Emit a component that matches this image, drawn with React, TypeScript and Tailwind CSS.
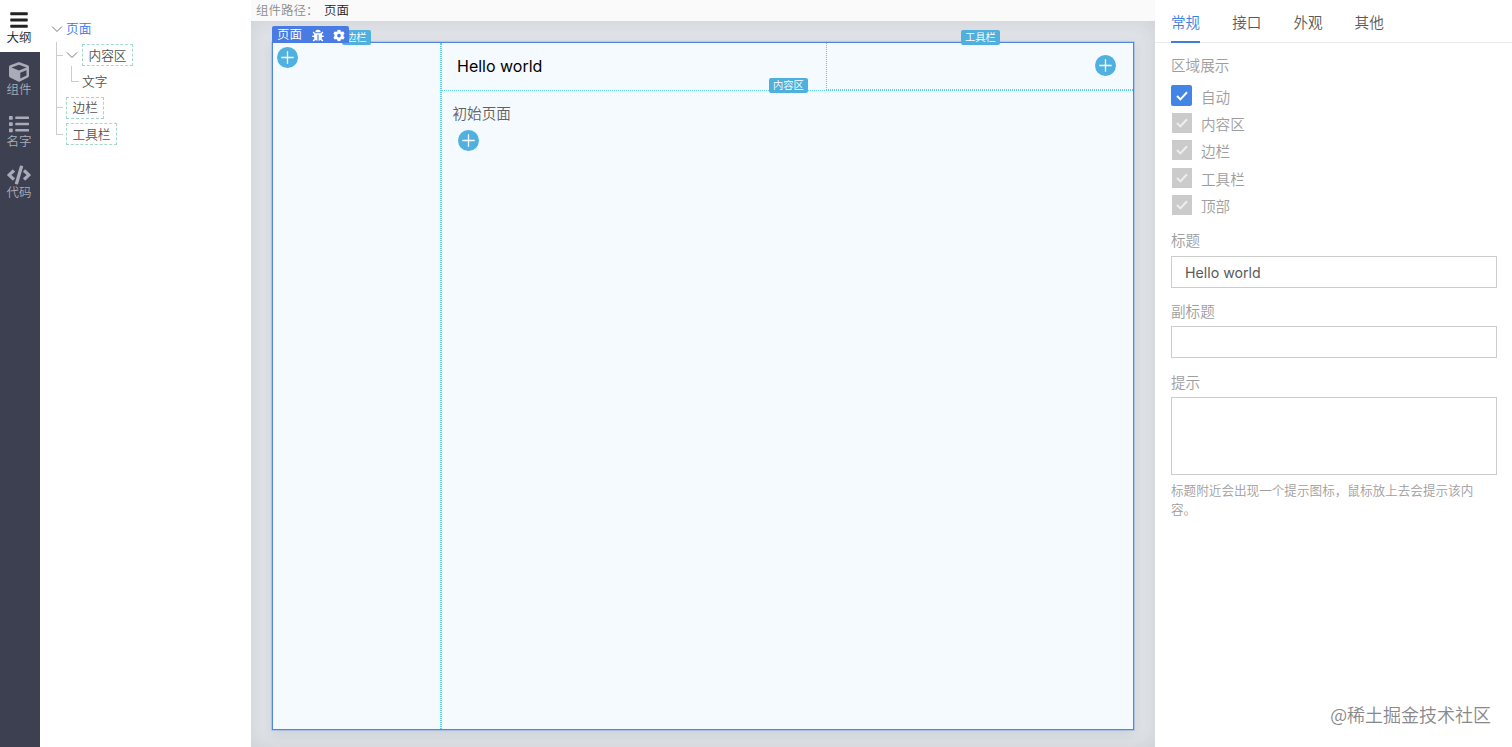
import React, { useState } from 'react';
import clsx from 'clsx';
import { FaBars, FaBug, FaCode, FaCog, FaCube, FaList } from 'react-icons/fa';

const navItems = [
  { label: '大纲', icon: FaBars },
  { label: '组件', icon: FaCube },
  { label: '名字', icon: FaList },
  { label: '代码', icon: FaCode },
];

const tabs = ['常规', '接口', '外观', '其他'];

const regions = [
  { label: '自动', disabled: false },
  { label: '内容区', disabled: true },
  { label: '边栏', disabled: true },
  { label: '工具栏', disabled: true },
  { label: '顶部', disabled: true },
];

function Chevron() {
  return (
    <svg className="h-[7px] w-3 shrink-0" viewBox="0 0 12 7" fill="none" stroke="#777" strokeWidth="1">
      <path d="M1 .5l5 5 5-5" />
    </svg>
  );
}

function NavBar() {
  return (
    <nav className="flex w-10 shrink-0 flex-col bg-[#3c4050]">
      {navItems.map(({ label, icon: Icon }, i) => (
        <div
          key={label}
          className={clsx(
            'flex flex-col items-center pr-[2px]',
            i === 0 ? 'h-[52px] bg-white pt-[10px] text-[#222]' : 'h-[51.5px] pt-[10px] text-[#a9acb8]'
          )}
        >
          <Icon className={clsx('h-5 shrink-0', label === '代码' ? 'w-6' : 'w-5')} />
          <span className="-mt-px text-[12.5px] leading-[15px]">{label}</span>
        </div>
      ))}
    </nav>
  );
}

function Slot({ children }: { children: React.ReactNode }) {
  return (
    <span className="flex h-[22px] items-center border border-dashed border-[#a3d8ca] px-[5.5px] pb-[2px] whitespace-nowrap">
      {children}
    </span>
  );
}

function Outline() {
  return (
    <aside className="w-[211px] shrink-0 bg-white pt-4 pl-[11px] text-[12.7px] text-[#555]">
      <div className="flex h-[26px] items-center gap-[3px] text-[#3478f6]">
        <Chevron />
        <span className="-translate-y-px">页面</span>
      </div>
      <div className="relative ml-[5px]">
        {/* guide line down to the last child */}
        <div className="absolute top-0 left-0 h-[93px] w-px bg-[#ccc]" />
        <div className="flex h-[26.4px] items-center">
          <div className="mr-[3px] h-px w-[7px] bg-[#ccc]" />
          <Chevron />
          <div className="ml-1">
            <Slot>内容区</Slot>
          </div>
        </div>
        <div className="flex h-[26.4px] items-center pl-[15px]">
          <div className="mr-[3px] h-4 w-[8px] -translate-y-2 border-b border-l border-[#ccc]" />
          <span className="-translate-y-px">文字</span>
        </div>
        {['边栏', '工具栏'].map((name) => (
          <div key={name} className="flex h-[26.2px] items-center">
            <div className="mr-[3px] h-px w-[7px] bg-[#ccc]" />
            <Slot>{name}</Slot>
          </div>
        ))}
      </div>
    </aside>
  );
}

function AddButton() {
  return (
    <button className="flex h-[21px] w-[21px] items-center justify-center rounded-full bg-[#50b0e0]">
      <svg className="h-[13px] w-[13px]" viewBox="0 0 13 13" stroke="#fff" strokeWidth="1.3">
        <path d="M6.5 .3v12.4M.3 6.5h12.4" />
      </svg>
    </button>
  );
}

function RegionTag({ children, className }: { children: React.ReactNode; className?: string }) {
  return (
    <span
      className={clsx(
        'absolute flex h-[15px] items-center rounded-[2px] bg-[#50b0dd] px-1 text-[10.3px] leading-none whitespace-nowrap text-white',
        className
      )}
    >
      {children}
    </span>
  );
}

function Canvas() {
  return (
    <main className="flex min-w-0 flex-1 flex-col">
      <div className="flex h-[21px] shrink-0 items-center bg-[#fafafa] pl-[5px] text-[12.5px]">
        <span className="w-[68px] text-[#8c8c8c]">组件路径：</span>
        <span className="text-[#222]">页面</span>
      </div>
      <div className="flex flex-1 bg-[#e0e3e8] pt-[21px] pr-[21px] pb-[17px] pl-[21px] shadow-[inset_0_0_20px_rgba(90,90,90,0.14)]">
        <div className="relative flex flex-1 border border-[#4f86e4] bg-[#f5faff] shadow-[0_3px_10px_rgba(60,90,120,0.14),0_0_0_0.5px_#8fb4ee]">
          <div className="w-[168px] shrink-0 border-r border-dotted border-[#5fd0ea] pt-1 pl-1">
            <AddButton />
          </div>
          <div className="flex flex-1 flex-col border-l border-dotted border-[#5fc8ea]">
            <header className="relative flex h-12 shrink-0 border-b border-dotted border-[#5fd0ea]">
              <div className="flex flex-1 items-center pl-[15px] font-['Inter','Liberation_Sans',sans-serif] text-base font-normal text-black">
                <span className="-translate-y-px">Hello world</span>
              </div>
              <div className="flex h-[47px] w-[307px] items-center justify-end border-b border-l border-dotted border-[#5fc8ea] pr-[17px] pb-px">
                <AddButton />
              </div>
              <RegionTag className="top-[35px] left-[327px]">内容区</RegionTag>
              <RegionTag className="-top-[13px] left-[519px]">工具栏</RegionTag>
            </header>
            <div className="pt-[12px] pl-[10.5px]">
              <p className="text-[14.6px] leading-5 text-[#626262]">初始页面</p>
              <div className="mt-[6.5px] ml-[5px]">
                <AddButton />
              </div>
            </div>
          </div>

          <RegionTag className="-top-[13px] left-[69px]">边栏</RegionTag>
          <div className="absolute -top-[17px] -left-px flex h-[17px] w-[77px] items-center rounded-t-[2px] bg-[#4a7be2] pl-[5px] text-[12.5px] leading-none text-white">
            <span>页面</span>
            <FaBug className="ml-[10px] h-3 w-3 translate-y-[0.5px]" />
            <FaCog className="ml-[9px] h-3 w-3 translate-y-[0.5px]" />
          </div>
        </div>
      </div>
    </main>
  );
}

function Checkbox({ disabled }: { disabled: boolean }) {
  return (
    <span
      className={clsx(
        'flex items-center justify-center',
        disabled
          ? 'mr-[0.5px] ml-[0.5px] h-5 w-5 bg-[#cbcbcb] text-[#eee]'
          : 'h-[21px] w-[21px] rounded-[2px] bg-[#4285e6] text-white'
      )}
    >
      <svg className="h-[10px] w-3" viewBox="0 0 12 10" fill="none" stroke="currentColor" strokeWidth="2">
        <path d="M1 5l3.4 3.4L11 1.2" />
      </svg>
    </span>
  );
}

function Settings() {
  const [active, setActive] = useState('常规');
  const [title, setTitle] = useState('Hello world');

  return (
    <aside className="relative z-10 w-[357px] shrink-0 bg-white text-[14.6px] text-[#9e9e9e]">
      <div className="flex h-[43px] gap-8 border-b border-[#ebebeb] pl-4 text-[#5a5a5a]">
        {tabs.map((tab) => (
          <button
            key={tab}
            onClick={() => setActive(tab)}
            className={clsx(
              'h-[43px] border-b-2 pt-[2px] whitespace-nowrap',
              active === tab ? 'border-[#3d80dc] text-[#3d80dc]' : 'border-transparent'
            )}
          >
            {tab}
          </button>
        ))}
      </div>
      <div className="pr-[15px] pl-4">
        <p className="mt-[12px] leading-5">区域展示</p>
        <div className="mt-[7px]">
          {regions.map((r) => (
            <div key={r.label} className="flex h-[27.3px] items-center gap-[9px]">
              <Checkbox disabled={r.disabled} />
              <span className="translate-y-px">{r.label}</span>
            </div>
          ))}
        </div>
        <label className="mt-[12px] block">
          <span className="block leading-5">标题</span>
          <input
            value={title}
            onChange={(e) => setTitle(e.target.value)}
            className="mt-[5.6px] block h-8 w-full border border-[#ccc] px-[13px] pt-px font-['Inter','Liberation_Sans',sans-serif] text-[14.2px] font-normal text-[#5a5a5a]"
          />
        </label>
        <label className="mt-[13px] block">
          <span className="block leading-5">副标题</span>
          <input className="mt-[5px] block h-8 w-full border border-[#ccc] px-3" />
        </label>
        <label className="mt-[13.5px] block">
          <span className="block leading-5">提示</span>
          <textarea className="mt-[5.5px] block h-[78px] w-full resize-none border border-[#ccc] p-3" />
        </label>
        <p className="mt-[5px] text-[12.6px] leading-[19px]">
          标题附近会出现一个提示图标，鼠标放上去会提示该内
          <br />
          容。
        </p>
      </div>
      <div className="absolute right-[21px] bottom-[19px] text-[18px] whitespace-nowrap text-[#888]">
        @稀土掘金技术社区
      </div>
    </aside>
  );
}

export default function App() {
  return (
    <div className="flex h-[747px] w-full overflow-hidden bg-white font-['Noto_Sans_CJK_SC',sans-serif] font-[350]">
      <NavBar />
      <Outline />
      <Canvas />
      <Settings />
    </div>
  );
}
